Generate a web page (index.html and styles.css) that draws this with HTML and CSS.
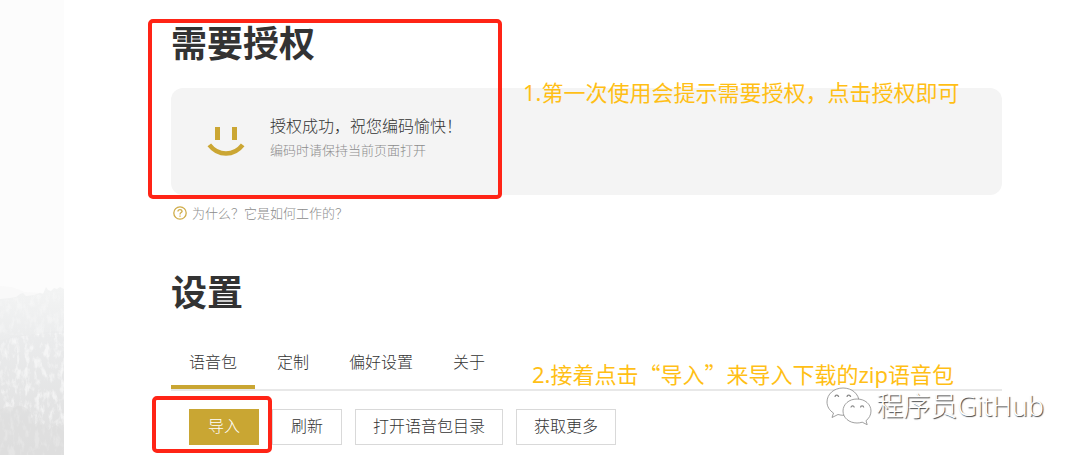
FILE: index.html
```html
<!DOCTYPE html>
<html lang="zh-CN">
<head>
<meta charset="utf-8">
<title>设置</title>
<link rel="stylesheet" href="styles.css">
</head>
<body>
<div class="layout">
  <aside class="side">
    <svg class="scene" viewBox="0 0 64 175" preserveAspectRatio="none" aria-hidden="true">
      <defs>
        <linearGradient id="far" x1="0" y1="0" x2="0" y2="1">
          <stop offset="0" stop-color="#f3f4f4"/><stop offset="1" stop-color="#e8e9ea"/>
        </linearGradient>
        <linearGradient id="near" x1="0" y1="0" x2="0" y2="1">
          <stop offset="0" stop-color="#ebeced"/><stop offset="1" stop-color="#dedede"/>
        </linearGradient>
        <filter id="frost" x="0" y="0" width="1" height="1">
          <feTurbulence type="fractalNoise" baseFrequency="0.2 0.09" numOctaves="4" seed="8"/>
          <feColorMatrix values="0 0 0 0 1  0 0 0 0 1  0 0 0 0 1  3.6 0 0 0 -1.7"/>
          <feComposite in2="SourceGraphic" operator="in"/>
        </filter>
      </defs>
      <path fill="#f9f9f9" d="M0 6 Q14 6 24 12 L64 14 V60 H0Z"/>
      <path fill="url(#far)" d="M0 19 L10 18 16 17 20 14 23 13 26 16 34 15 40 13 43 14 46 7 48 10 51 11 54 8 57 9 60 7 64 9 V80 H0Z"/>
      <path fill="url(#near)" d="M0 60 Q20 54 38 54 Q52 50 64 51 V175 H0Z"/>
      <path filter="url(#frost)" opacity=".55" d="M0 61 Q30 52 64 53 V175 H0Z"/>
      <path filter="url(#frost)" opacity=".3" d="M0 20 L64 11 V55 H0Z"/>
      <path fill="#dddddd" opacity=".6" d="M0 130 Q8 124 14 128 Q22 122 30 132 L34 145 40 140 48 150 56 145 64 152 V175 H0Z"/>
    </svg>
  </aside>
  <main class="main">
    <section class="auth">
      <h1 class="title">需要授权</h1>
      <div class="panel">
        <svg class="smile" viewBox="0 0 38 32" aria-hidden="true">
          <path fill="#cba633" d="M8 1h5v13H8zM25 1h5v13h-5z"/>
          <path fill="none" stroke="#cba633" stroke-width="4.500" d="M2.300 18.800Q9 27.500 19 27.500T35.700 18.800"/>
        </svg>
        <div class="message">
          <p class="lead">授权成功，祝您编码愉快！</p>
          <p class="hint">编码时请保持当前页面打开</p>
        </div>
      </div>
      <a class="help" href="#how">
        <svg class="help-icon" viewBox="0 0 14 14" fill="none" stroke="#cfac48" stroke-width="1.300" aria-hidden="true">
          <circle cx="7" cy="7" r="6.200"/>
          <path d="M4.900 5.500Q5 3.600 7 3.600T9.100 5.300C9.100 6.700 7 6.500 7 8.400M7 9.500v1.300"/>
        </svg>
        <span>为什么？它是如何工作的？</span>
      </a>
      <div class="frame frame-auth"></div>
      <p class="note note-auth">1.第一次使用会提示需要授权，点击授权即可</p>
    </section>

    <section class="settings">
      <h1 class="title">设置</h1>
      <nav class="tabs">
        <button class="tab tab-active" type="button">语音包</button>
        <button class="tab" type="button">定制</button>
        <button class="tab" type="button">偏好设置</button>
        <button class="tab" type="button">关于</button>
      </nav>
      <div class="actions">
        <button class="btn btn-primary" type="button">导入</button>
        <button class="btn" type="button">刷新</button>
        <button class="btn" type="button">打开语音包目录</button>
        <button class="btn" type="button">获取更多</button>
      </div>
      <div class="frame frame-import"></div>
      <p class="note note-import">2.接着点击<span class="quoted">“导入”</span>来导入下载的zip语音包</p>
    </section>
  </main>
  <div class="watermark">
    <svg class="wechat" viewBox="0 0 46 38" fill="#fff" stroke="#888" stroke-width=".8" aria-hidden="true">
      <path d="M17 1C8 1 1 7 1 15c0 4.500 2.500 8.500 6.500 11L6 30.500l6-3c2 .6 4 .8 6 .8 8-.3 15-6 15-13.500C33 7 26 1 17 1Z"/>
      <path fill="none" stroke-width="1.200" d="M9 10a1.800 1.800 0 1 1 3.600 0M21 10a1.800 1.800 0 1 1 3.600 0"/>
      <path d="M31 12c-8 0-14 5.300-14 12s6 12 14 12c2 0 3.600-.3 5.200-.8l5 2.500-1.200-4C43 31.500 45 28 45 24c0-6.700-6-12-14-12Z"/>
      <path fill="none" stroke-width="1.200" d="M25 20.500a1.600 1.600 0 1 1 3.200 0M34.500 20.500a1.600 1.600 0 1 1 3.200 0"/>
    </svg>
    <span>程序员GitHub</span>
  </div>
</div>
</body>
</html>
```
FILE: styles.css
```css
* { box-sizing: border-box; }

body {
  margin: 0;
  background: #fff;
  color: #333;
  font: 300 16px/24px "Noto Sans", "Noto Sans CJK SC", sans-serif;
}

h1, p { margin: 0; }

button { font: inherit; color: inherit; cursor: pointer; }

.layout {
  position: relative;
  display: flex;
  min-height: 100vh;
}

.side {
  display: flex;
  align-items: flex-end;
  flex: 0 0 64px;
  background: #fcfcfc;
}

.scene { display: block; width: 100%; height: 175px; }

.main {
  flex: 1;
  min-width: 0;
  padding: 20px 78px 10px 107px;
}

.auth, .settings { position: relative; }

.title {
  color: #333;
  font-size: 36px;
  font-weight: 700;
  line-height: 48px;
}

.panel {
  display: flex;
  align-items: center;
  gap: 25px;
  min-height: 107px;
  margin-top: 20px;
  padding: 0 36px;
  border-radius: 12px;
  background: #f4f4f4;
}

.smile { width: 38px; height: 32px; }

.message { padding-bottom: 8px; }

.hint, .help { color: #8c8c8c; font-size: 13px; }

.help {
  display: flex;
  align-items: center;
  gap: 5px;
  margin-top: 6px;
  padding-left: 2px;
  text-decoration: none;
}

.help-icon { width: 14px; height: 14px; }

.settings { margin-top: 44px; }

.tabs {
  display: flex;
  gap: 4px;
  margin-top: 21px;
  border-bottom: 2px solid #e8e8e8;
}

.tab {
  height: 51px;
  padding: 0 18px;
  border: 0;
  border-bottom: 4px solid transparent;
  background: none;
}

.tab-active { border-bottom-color: #c9a633; }

.actions {
  display: flex;
  gap: 13px;
  margin-top: 18px;
  padding-left: 18px;
}

.btn {
  min-width: 70px;
  height: 36px;
  padding: 0 17px 2px;
  border: 1px solid #d9d9d9;
  background: #fff;
}

.btn-primary { border-color: #c9a633; background: #c9a633; color: #fff; }

.frame {
  position: absolute;
  border: 4px solid #ff2416;
  border-radius: 5px;
  pointer-events: none;
}

.frame-auth { top: -1px; left: -23px; width: 354px; height: 180px; }

.frame-import { bottom: -8px; left: -19px; width: 120px; height: 57px; }

.note {
  position: absolute;
  color: #ffbf16;
  font-size: 22px;
  font-weight: 400;
  line-height: 32px;
  white-space: nowrap;
}

.note-auth { top: 56px; left: 352px; }

.note-import { top: 88px; left: 361px; }

.quoted { font-family: "Noto Sans CJK SC", sans-serif; }

.watermark {
  position: absolute;
  right: 36px;
  bottom: 30px;
  display: flex;
  align-items: center;
  gap: 4px;
  color: #fff;
  font-size: 27px;
  line-height: 38px;
  text-shadow: 1px 1px 1px #444;
}

.wechat { width: 46px; height: 38px; }
```
